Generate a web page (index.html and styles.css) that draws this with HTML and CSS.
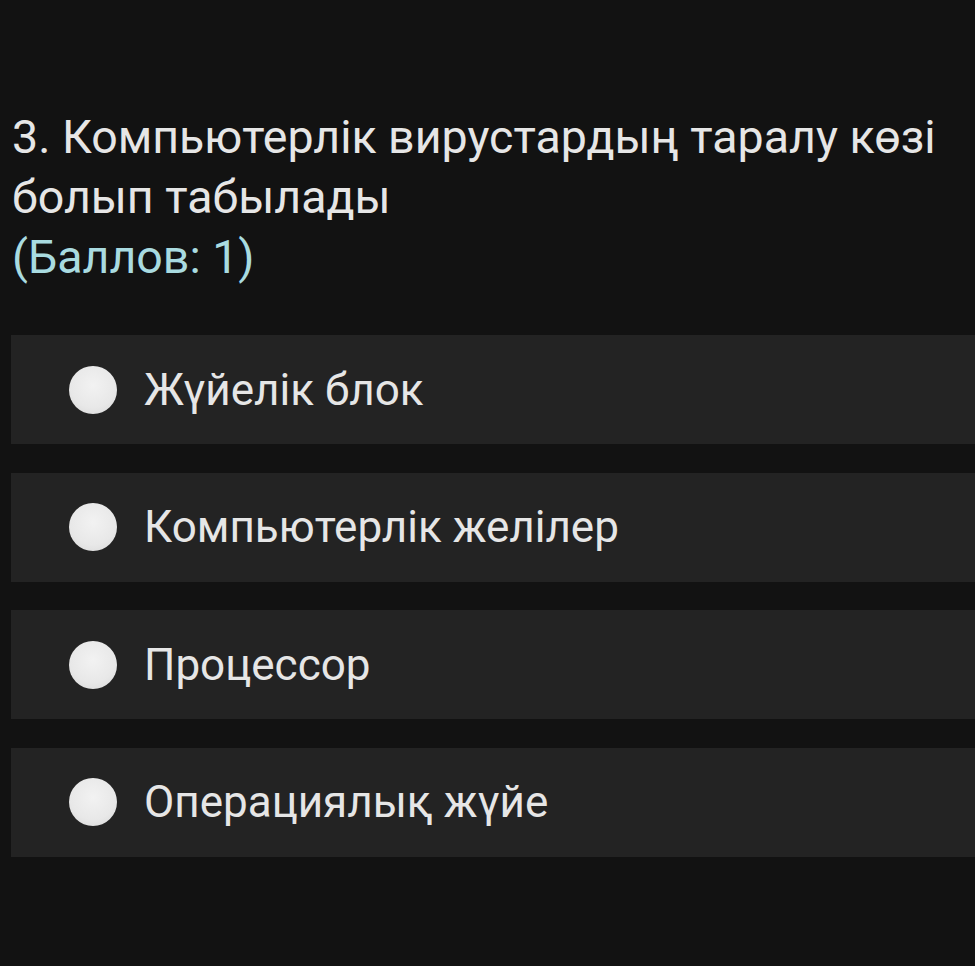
FILE: index.html
```html
<!DOCTYPE html>
<html>
<head>
<meta charset="utf-8">
<link rel="stylesheet" href="styles.css">
</head>
<body>
<div class="page">
  <div class="question">
    <div class="qtext">3. Компьютерлік вирустардың таралу көзі болып табылады</div>
    <div class="points">(Баллов: 1)</div>
  </div>
  <div class="options">
    <div class="option"><span class="radio"></span><span class="label">Жүйелік блок</span></div>
    <div class="option"><span class="radio"></span><span class="label">Компьютерлік желілер</span></div>
    <div class="option"><span class="radio"></span><span class="label">Процессор</span></div>
    <div class="option"><span class="radio"></span><span class="label">Операциялық жүйе</span></div>
  </div>
</div>
</body>
</html>
```
FILE: styles.css
```css
html, body {
  margin: 0;
  padding: 0;
  background: #121212;
}
.page {
  width: 975px;
  height: 966px;
  background: #121212;
  font-family: Roboto, "Noto Sans", sans-serif;
  color: #e6e6e6;
  padding-top: 107px;
  box-sizing: border-box;
}
.question {
  padding: 0 20px 0 12px;
  font-size: 46.5px;
  line-height: 60px;
}
.points {
  color: #a9dbe0;
}
.options {
  margin-top: 48px;
  margin-left: 11px;
  display: flex;
  flex-direction: column;
  gap: 28.4px;
}
.option {
  background: #232323;
  height: 109.2px;
  display: flex;
  align-items: center;
  padding-left: 58px;
}
.radio {
  width: 48px;
  height: 48px;
  border-radius: 50%;
  background: radial-gradient(circle at 50% 40%, #f2f2f2 0%, #e8e8e8 60%, #d6d6d6 100%);
  flex: none;
}
.label {
  margin-left: 27px;
  font-size: 44px;
  color: #e6e6e6;
}
```
